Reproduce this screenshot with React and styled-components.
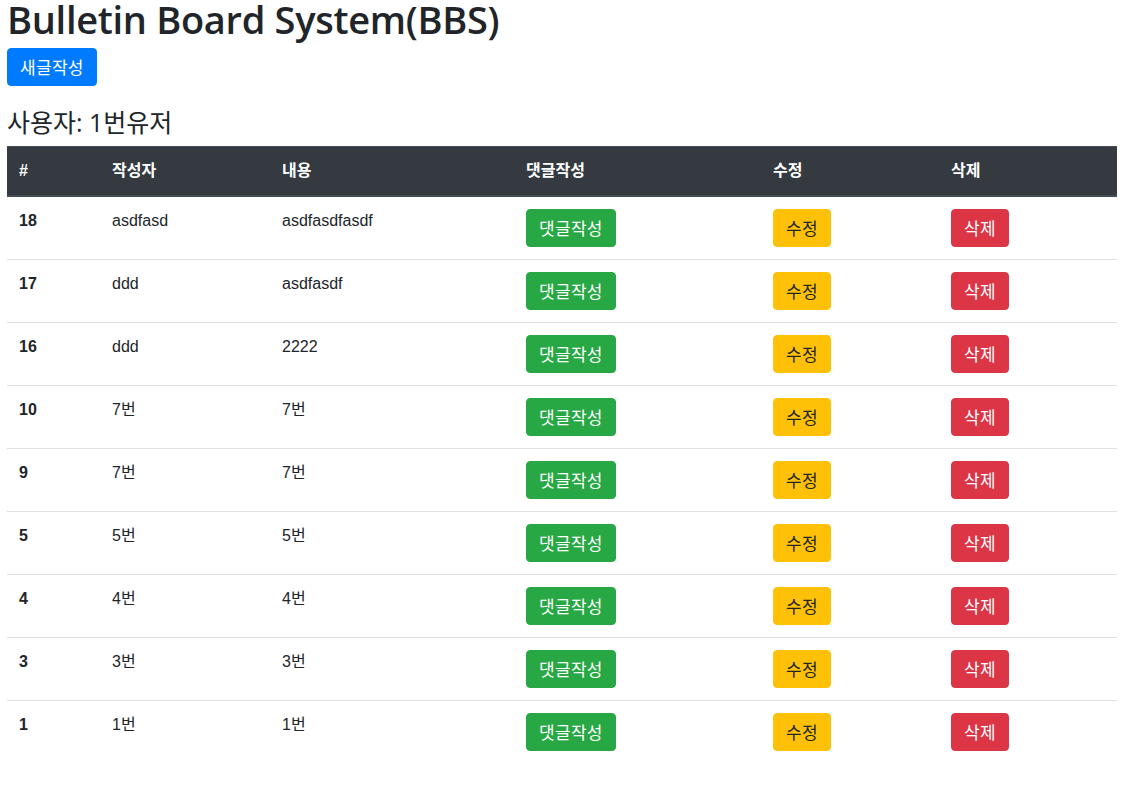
import React from 'react';
import styled, { createGlobalStyle } from 'styled-components';

const GlobalStyle = createGlobalStyle`
  body {
    margin: 0;
    background: #fff;
    color: #212529;
    font-family: "Liberation Sans", "Noto Sans CJK KR", sans-serif;
    font-size: 16px;
    line-height: 1.5;
  }
`;

const Page = styled.div`
  padding-left: 7px;
  width: 1110px;
`;

const Title = styled.h1`
  margin: 0 0 10px;
  font-family: "Open Sans", "Noto Sans CJK KR", sans-serif;
  font-size: 38px;
  font-weight: 600;
  line-height: 38px;
  letter-spacing: -0.3px;
  color: #212529;
`;

const Button = styled.button`
  display: inline-block;
  font-family: "Noto Sans CJK KR", sans-serif;
  font-size: 17px;
  line-height: 24px;
  letter-spacing: 0.3px;
  padding: 6px 12px;
  border: 1px solid ${(p) => p.$bg};
  border-radius: 4px;
  background: ${(p) => p.$bg};
  color: ${(p) => p.$fg || '#fff'};
  cursor: pointer;
`;

const UserLine = styled.h4`
  margin: 22px 0 9px;
  font-family: "Open Sans", "Noto Sans CJK KR", sans-serif;
  font-size: 25px;
  font-weight: 400;
  line-height: 29px;
`;

const Table = styled.table`
  width: 1110px;
  border-collapse: collapse;
  table-layout: fixed;
`;

const HeadCell = styled.th`
  background: #343a40;
  color: #fff;
  text-align: left;
  font-weight: 700;
  padding: 12px;
  vertical-align: bottom;
  border-top: 1px solid #454d55;
  border-bottom: 2px solid #454d55;
`;

const Row = styled.tr`
  border-top: 1px solid #dee2e6;
`;

const Cell = styled.td`
  padding: 12px;
  vertical-align: top;
  font-weight: ${(p) => (p.$bold ? 700 : 400)};
`;

const widths = [93, 170, 244, 247, 178, 178];
const headers = ['#', '작성자', '내용', '댓글작성', '수정', '삭제'];

const posts = [
  { id: 18, writer: 'asdfasd', content: 'asdfasdfasdf' },
  { id: 17, writer: 'ddd', content: 'asdfasdf' },
  { id: 16, writer: 'ddd', content: '2222' },
  { id: 10, writer: '7번', content: '7번' },
  { id: 9, writer: '7번', content: '7번' },
  { id: 5, writer: '5번', content: '5번' },
  { id: 4, writer: '4번', content: '4번' },
  { id: 3, writer: '3번', content: '3번' },
  { id: 1, writer: '1번', content: '1번' },
];

function App() {
  return (
    <Page>
      <GlobalStyle />
      <Title>Bulletin Board System(BBS)</Title>
      <Button $bg="#007bff">새글작성</Button>
      <UserLine>사용자: 1번유저</UserLine>
      <Table>
        <colgroup>
          {widths.map((w, i) => (
            <col key={i} style={{ width: w }} />
          ))}
        </colgroup>
        <thead>
          <tr>
            {headers.map((h) => (
              <HeadCell key={h}>{h}</HeadCell>
            ))}
          </tr>
        </thead>
        <tbody>
          {posts.map((p) => (
            <Row key={p.id}>
              <Cell $bold>{p.id}</Cell>
              <Cell>{p.writer}</Cell>
              <Cell>{p.content}</Cell>
              <Cell>
                <Button $bg="#28a745">댓글작성</Button>
              </Cell>
              <Cell>
                <Button $bg="#ffc107" $fg="#212529">수정</Button>
              </Cell>
              <Cell>
                <Button $bg="#dc3545">삭제</Button>
              </Cell>
            </Row>
          ))}
        </tbody>
      </Table>
    </Page>
  );
}

export default App;
